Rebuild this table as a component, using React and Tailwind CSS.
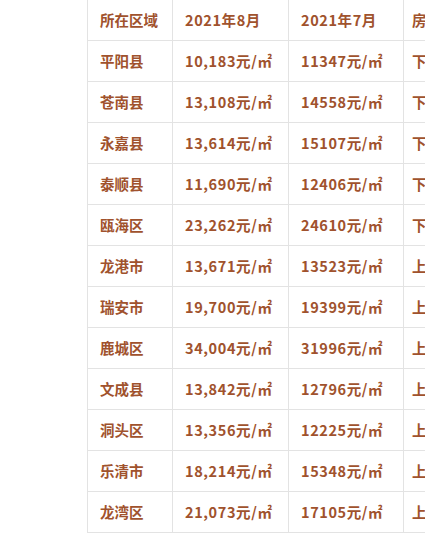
import React from "react";

const rows = [
  ["平阳县", "10,183元/㎡", "11347元/㎡", "下跌"],
  ["苍南县", "13,108元/㎡", "14558元/㎡", "下跌"],
  ["永嘉县", "13,614元/㎡", "15107元/㎡", "下跌"],
  ["泰顺县", "11,690元/㎡", "12406元/㎡", "下跌"],
  ["瓯海区", "23,262元/㎡", "24610元/㎡", "下跌"],
  ["龙港市", "13,671元/㎡", "13523元/㎡", "上涨"],
  ["瑞安市", "19,700元/㎡", "19399元/㎡", "上涨"],
  ["鹿城区", "34,004元/㎡", "31996元/㎡", "上涨"],
  ["文成县", "13,842元/㎡", "12796元/㎡", "上涨"],
  ["洞头区", "13,356元/㎡", "12225元/㎡", "上涨"],
  ["乐清市", "18,214元/㎡", "15348元/㎡", "上涨"],
  ["龙湾区", "21,073元/㎡", "17105元/㎡", "上涨"],
];

function Row({ cells }) {
  return (
    <div className="flex h-[41px] border-b border-[#e3e3e3]">
      <div className="w-[85px] shrink-0 border-r border-[#e3e3e3] pl-[12px] flex items-center">{cells[0]}</div>
      <div className="w-[116px] shrink-0 border-r border-[#e3e3e3] pl-[12px] flex items-center tracking-[0.6px]">{cells[1]}</div>
      <div className="w-[115px] shrink-0 border-r border-[#e3e3e3] pl-[12px] flex items-center tracking-[0.6px]">{cells[2]}</div>
      <div className="w-[100px] shrink-0 pl-[8px] flex items-center">{cells[3]}</div>
    </div>
  );
}

export default function App() {
  return (
    <div className="w-[425px] h-[535px] overflow-hidden bg-white pl-[87px]">
      <div
        className="w-[420px] border-l border-[#e3e3e3] text-[#a0522d] font-bold text-[14.5px] whitespace-nowrap"
        style={{ fontFamily: '"Noto Sans CJK SC", "Noto Sans", sans-serif' }}
      >
        <Row cells={["所在区域", "2021年8月", "2021年7月", "房价涨跌"]} />
        {rows.map((r) => (
          <Row key={r[0]} cells={r} />
        ))}
      </div>
    </div>
  );
}
